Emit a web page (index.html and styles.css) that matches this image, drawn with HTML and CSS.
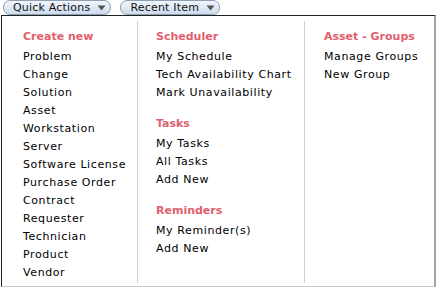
FILE: index.html
```html
<!DOCTYPE html>
<html>
<head>
    <title>Quick Actions</title>
    <link rel="stylesheet" href="styles.css">
</head>
<body>
    <div class="toolbar">
        <span class="pill">Quick Actions <svg class="caret" width="9" height="6" viewBox="0 0 9 6"><path d="M0.5 0.5 H8.5 L4.5 5.5 Z" fill="#555"/></svg></span>
        <span class="pill">Recent Item <svg class="caret" width="9" height="6" viewBox="0 0 9 6"><path d="M0.5 0.5 H8.5 L4.5 5.5 Z" fill="#555"/></svg></span>
    </div>

    <div class="menu">
        <div class="column first">
            <div class="group">
                <div class="heading">Create new</div>
                <div class="item">Problem</div>
                <div class="item">Change</div>
                <div class="item">Solution</div>
                <div class="item">Asset</div>
                <div class="item">Workstation</div>
                <div class="item">Server</div>
                <div class="item">Software License</div>
                <div class="item">Purchase Order</div>
                <div class="item">Contract</div>
                <div class="item">Requester</div>
                <div class="item">Technician</div>
                <div class="item">Product</div>
                <div class="item">Vendor</div>
            </div>
        </div>
        <div class="column second">
            <div class="group">
                <div class="heading">Scheduler</div>
                <div class="item">My Schedule</div>
                <div class="item">Tech Availability Chart</div>
                <div class="item">Mark Unavailability</div>
            </div>
            <div class="group">
                <div class="heading">Tasks</div>
                <div class="item">My Tasks</div>
                <div class="item">All Tasks</div>
                <div class="item">Add New</div>
            </div>
            <div class="group">
                <div class="heading">Reminders</div>
                <div class="item">My Reminder(s)</div>
                <div class="item">Add New</div>
            </div>
        </div>
        <div class="column third">
            <div class="group">
                <div class="heading">Asset - Groups</div>
                <div class="item">Manage Groups</div>
                <div class="item">New Group</div>
            </div>
        </div>
    </div>

    <div class="page-text">Pending Attachments</div>
</body>
</html>
```

FILE: styles.css
```css
body {
    margin: 0;
    font-family: "DejaVu Sans", Verdana, sans-serif;
    font-size: 11px;
    color: #000;
    background-color: #fff;
    overflow: hidden;
}
.toolbar {
    display: flex;
    gap: 9px;
    height: 15px;
    padding-left: 3px;
}
.pill {
    display: flex;
    align-items: center;
    gap: 7px;
    height: 13px;
    padding: 0 4px 0 9px;
    border: 1px solid #8d9fb5;
    border-radius: 7px;
    background: linear-gradient(#f2f6fc, #cddbed);
    letter-spacing: 0.2px;
    line-height: 13px;
    color: #111;
}
.caret {
    display: block;
}
.menu {
    display: flex;
    width: 432px;
    height: 270px;
    margin-left: 1px;
    border-top: 1px solid #222;
    border-left: 1px solid #222;
    border-right: 2px solid #a3a3a3;
    border-bottom: 1px solid #c8c8c8;
    background-color: #fff;
}
.column {
    display: flex;
    flex-direction: column;
    gap: 13px;
    margin: 5px 0 3px;
    padding: 7px 0 0 21px;
}
.first {
    width: 114px;
}
.second {
    width: 148px;
    border-left: 1px solid #d0d0d0;
    padding-left: 18px;
}
.third {
    flex: 1;
    border-left: 1px solid #d0d0d0;
    padding-left: 19px;
}
.heading {
    height: 18px;
    line-height: 18px;
    margin-bottom: 2px;
    font-weight: bold;
    color: #e0606e;
}
.item {
    height: 18px;
    line-height: 18px;
    letter-spacing: 0.6px;
    white-space: nowrap;
}
.page-text {
    margin-top: 0;
    letter-spacing: 0.6px;
}
```
